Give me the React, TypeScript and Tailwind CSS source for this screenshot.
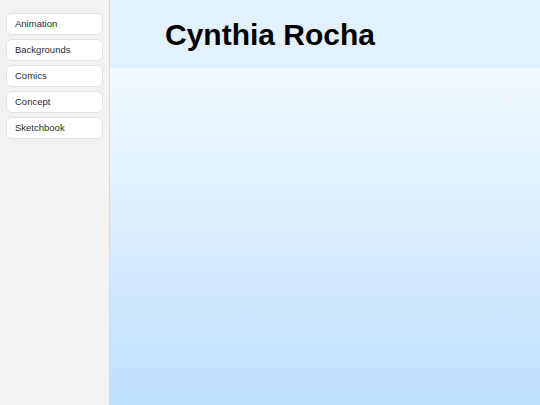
const items = ['Animation', 'Backgrounds', 'Comics', 'Concept', 'Sketchbook']

export default function App() {
  return (
    <div className="flex h-[405px] w-[540px] font-['Liberation_Sans',Arial,sans-serif]">
      <aside className="flex w-[110px] shrink-0 flex-col gap-1 border-r border-[#d9d9d9] bg-[#f2f2f2] pl-1.5 pr-[6px] pt-[13px] shadow-[1px_0_3px_rgba(0,0,0,0.12)]">
        {items.map((item) => (
          <button
            key={item}
            className="h-[22px] rounded-md border border-[#e2e2e2] bg-white pl-2 text-left text-[9.5px] text-[#2b2b2b]"
          >
            {item}
          </button>
        ))}
      </aside>
      <main className="flex flex-1 flex-col">
        <header className="flex h-[68px] items-center bg-[#e3f1fd] pl-[55px]">
          <h1 className="text-[30px] font-bold text-black">Cynthia Rocha</h1>
        </header>
        <section className="flex-1 bg-gradient-to-b from-[#f2f9ff] to-[#bde0fe]" />
      </main>
    </div>
  )
}
